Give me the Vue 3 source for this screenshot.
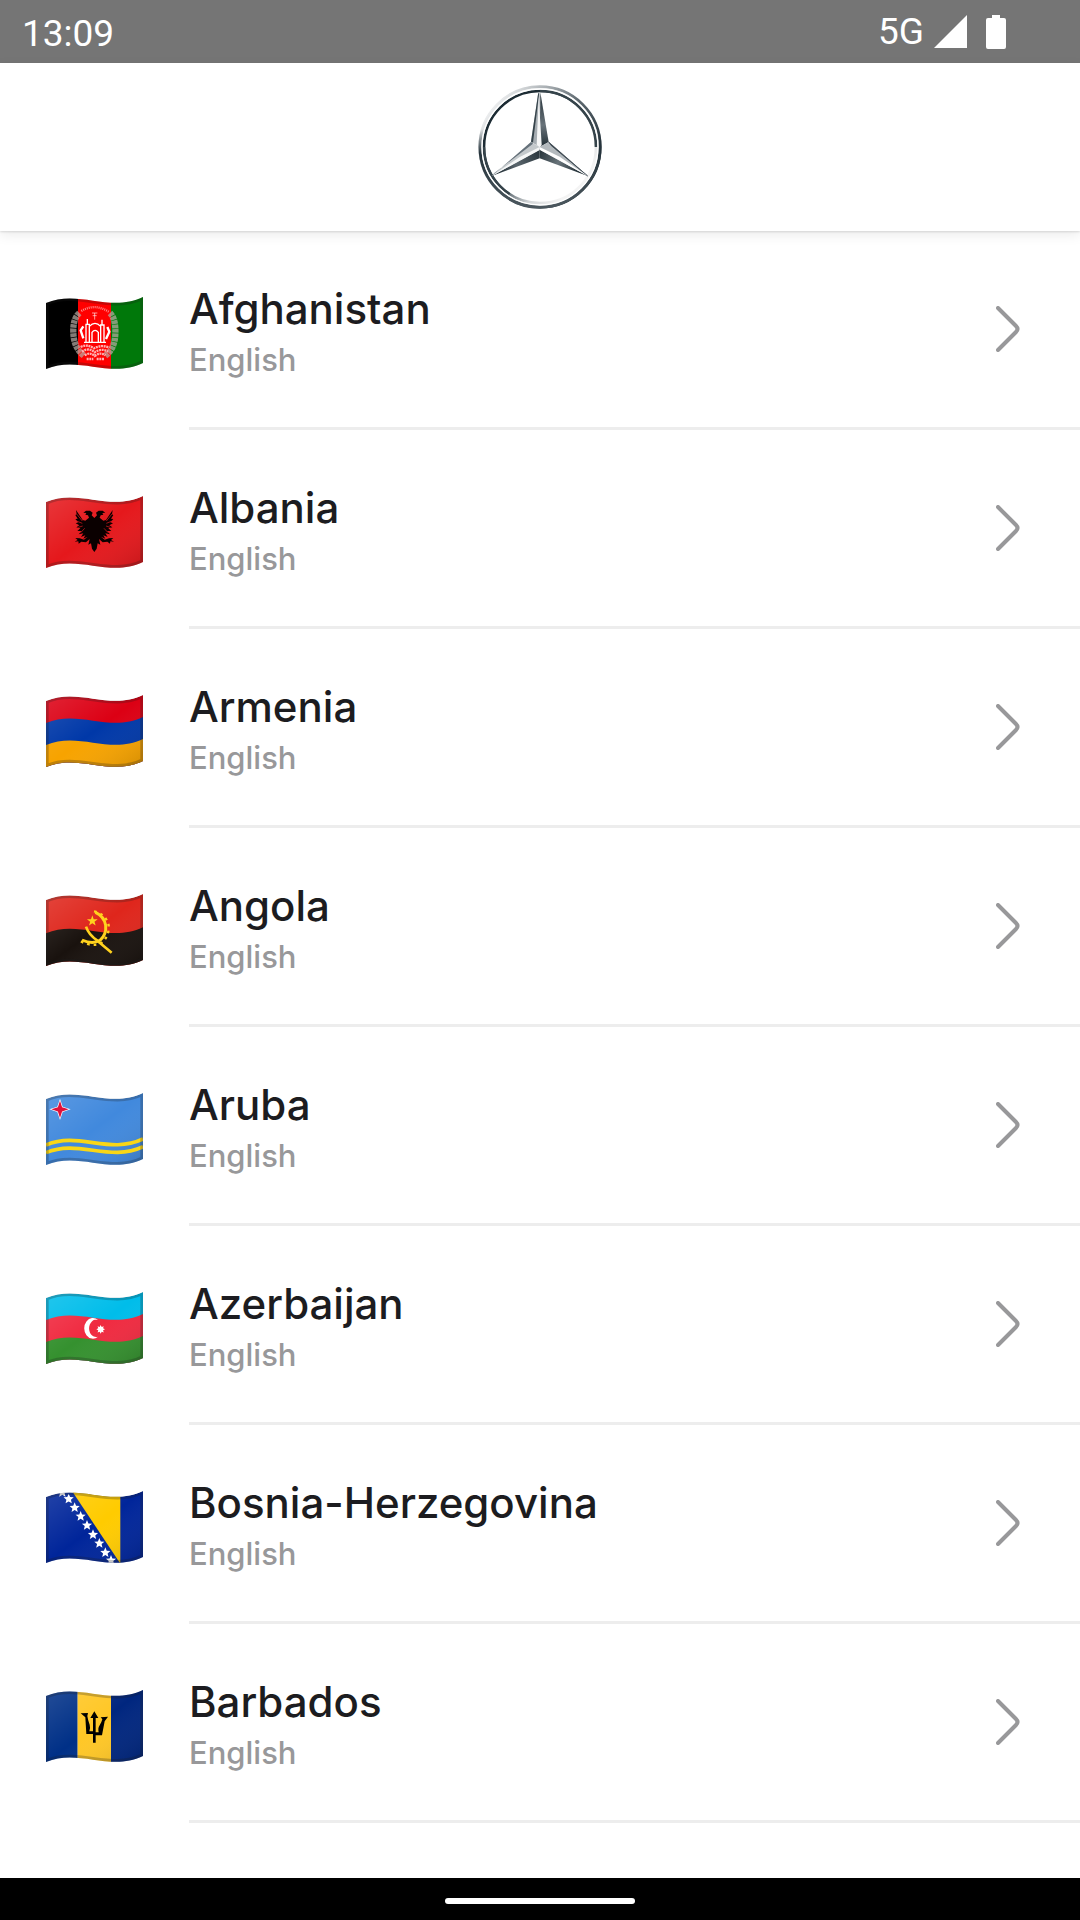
<script setup>
const countries = [
  { code: 'af', name: 'Afghanistan', language: 'English' },
  { code: 'al', name: 'Albania', language: 'English' },
  { code: 'am', name: 'Armenia', language: 'English' },
  { code: 'ao', name: 'Angola', language: 'English' },
  { code: 'aw', name: 'Aruba', language: 'English' },
  { code: 'az', name: 'Azerbaijan', language: 'English' },
  { code: 'ba', name: 'Bosnia-Herzegovina', language: 'English' },
  { code: 'bb', name: 'Barbados', language: 'English' },
]

// Horizontal bands of each flag: [offset from the top edge, colour]
const bands = {
  al: [[0, '#e5181c']],
  am: [[0, '#dc0014'], [66, '#0038a8'], [132, '#f7a300']],
  ao: [[0, '#df261c'], [100, '#19120e']],
  aw: [[0, '#4189dd']],
  az: [[0, '#00bdea'], [66, '#f02a40'], [132, '#35912f']],
  ba: [[0, '#00259a']],
}

// Vertical stripes of each flag: [x, width, colour]
const stripes = {
  af: [[0, 96, '#000'], [96, 99, '#ff0000'], [195, 96, '#00780a']],
  bb: [[0, 95, '#003087'], [95, 100, '#ffc726'], [195, 96, '#00267f']],
}

const bosniaStars = [[49, 4], [68, 24], [86, 50], [104, 76], [123, 103], [141, 131], [160, 157], [178, 185], [195, 208]]

const band = (d) => `M0 ${18 + d}C96 ${d - 24} 192 ${48 + d} 291 ${d}V230H0Z`
const wave = (d) => `M0 ${18 + d}C96 ${d - 24} 192 ${48 + d} 291 ${d}`
const outline = 'M0 18C96 -24 192 48 291 0V198C192 246 96 174 0 216Z'

function star(cx, cy, r, points = 5, inner = 0.4) {
  const out = []
  for (let i = 0; i < points * 2; i++) {
    const a = (Math.PI * i) / points - Math.PI / 2
    const k = i % 2 ? r * inner : r
    out.push(`${(cx + k * Math.cos(a)).toFixed(1)},${(cy + k * Math.sin(a)).toFixed(1)}`)
  }
  return out.join(' ')
}
</script>

<template>
  <div class="screen">
    <div class="status">
      <span class="clock">13:09</span>
      <div class="indicators">
        <span class="network">5G</span>
        <svg class="signal" viewBox="0 0 33 33" aria-hidden="true"><path d="M33 0V33H0Z" fill="#fff" /></svg>
        <svg class="battery" viewBox="0 0 20 34" aria-hidden="true">
          <path d="M6 0H14V3H18Q20 3 20 5V32Q20 34 18 34H2Q0 34 0 32V5Q0 3 2 3H6Z" fill="#fff" />
        </svg>
      </div>
    </div>

    <header class="header">
      <svg class="logo" viewBox="52 41 378 378" role="img" aria-label="Mercedes-Benz">
        <defs>
          <linearGradient id="ring-outer" x1="0.1" y1="0.15" x2="0.85" y2="0.7">
            <stop offset="0" stop-color="#f1f2f3" />
            <stop offset="0.3" stop-color="#a9afb3" />
            <stop offset="0.6" stop-color="#5d686f" />
            <stop offset="1" stop-color="#26343c" />
          </linearGradient>
          <linearGradient id="ring-low" x1="0" y1="0" x2="0" y2="1">
            <stop offset="0.35" stop-color="#26343c" stop-opacity="0" />
            <stop offset="0.55" stop-color="#26343c" />
            <stop offset="1" stop-color="#4b575e" />
          </linearGradient>
          <linearGradient id="ring-inner" x1="0.2" y1="0.3" x2="0.8" y2="0.85">
            <stop offset="0" stop-color="#1c2b33" />
            <stop offset="0.5" stop-color="#58646b" />
            <stop offset="0.75" stop-color="#d3d6d8" />
            <stop offset="1" stop-color="#f4f4f4" />
          </linearGradient>
          <linearGradient id="arm-dark" x1="0" y1="0" x2="0" y2="1">
            <stop offset="0" stop-color="#1f2c33" />
            <stop offset="0.6" stop-color="#69737a" />
            <stop offset="1" stop-color="#222f36" />
          </linearGradient>
          <linearGradient id="arm-right" x1="0" y1="0" x2="1" y2="0.3">
            <stop offset="0" stop-color="#26333a" />
            <stop offset="0.5" stop-color="#69747a" />
            <stop offset="1" stop-color="#1f2c33" />
          </linearGradient>
          <linearGradient id="arm-left" x1="1" y1="0" x2="0" y2="0.3">
            <stop offset="0" stop-color="#26333a" />
            <stop offset="0.6" stop-color="#5b666d" />
            <stop offset="1" stop-color="#26333a" />
          </linearGradient>
        </defs>
        <g fill="none">
          <circle cx="241" cy="230" r="176" stroke="#e6e8e9" stroke-width="16" />
          <circle cx="241" cy="230" r="181" stroke="url(#ring-outer)" stroke-width="8" />
          <circle cx="241" cy="230" r="180" stroke="url(#ring-low)" stroke-width="9" />
          <circle cx="241" cy="230" r="168" stroke="url(#ring-inner)" stroke-width="8" />
          <path d="M241 62A168 168 0 0 1 409 230" stroke="#35434a" stroke-width="8" />
          <path d="M73 230A168 168 0 0 0 150 371" stroke="#35434a" stroke-width="7" />
          <circle cx="241" cy="230" r="174" stroke="#fff" stroke-width="4" />
        </g>
        <path d="M236 66L214 214L240 230V66Z" fill="#a6adb2" />
        <path d="M236 66L214 214L220 217L238 72Z" fill="#35434a" />
        <path d="M242 66L267 215L240 230Z" fill="url(#arm-dark)" />
        <path d="M237 80L231 224L240 232L246 224Z" fill="#f5f6f6" />
        <path d="M240 236V264L96 317Z" fill="url(#arm-left)" />
        <path d="M214 215L240 230V238L96 317Z" fill="#c4c9cc" />
        <path d="M214 215L220 220L104 308L96 317Z" fill="#65717a" />
        <path d="M240 230V239L96 317L180 260Z" fill="#f6f7f7" />
        <path d="M240 236V264L384 317Z" fill="url(#arm-right)" />
        <path d="M267 215L240 230V238L384 317Z" fill="#b4babe" />
        <path d="M267 215L384 317L275 226Z" fill="#36434b" stroke="#36434b" stroke-width="2" />
        <path d="M240 230V238L384 317L300 259Z" fill="#fff" />
      </svg>
    </header>

    <main class="content">
      <ul class="list">
        <li v-for="c in countries" :key="c.code">
          <button type="button" class="row">
            <svg class="flag" viewBox="0 0 291 219" aria-hidden="true">
              <defs>
                <clipPath :id="`cut-${c.code}`"><path :d="outline" /></clipPath>
                <linearGradient :id="`shade-${c.code}`" x1="0" y1="0" x2="1" y2="1">
                  <stop offset="0" stop-color="#fff" stop-opacity="0.14" />
                  <stop offset="0.5" stop-color="#fff" stop-opacity="0" />
                  <stop offset="1" stop-color="#000" stop-opacity="0.14" />
                </linearGradient>
              </defs>
              <g :clip-path="`url(#cut-${c.code})`">
                <path v-for="b in bands[c.code]" :key="b[0]" :d="band(b[0])" :fill="b[1]" />
                <rect v-for="s in stripes[c.code]" :key="s[0]" :x="s[0]" y="0" :width="s[1]" height="219" :fill="s[2]" />
                <path v-if="c.code === 'ba'" d="M66 -18L223 218V-18Z" fill="#ffcb00" />
                <path v-if="c.code !== 'af'" :d="outline" :fill="`url(#shade-${c.code})`" />

                <g v-if="c.code === 'af'" fill="none" stroke="#fff">
                  <path d="M100 48Q80 66 82 108Q84 154 114 176M192 48Q210 66 208 112Q206 156 178 176" stroke="#b5aca4" stroke-width="19" stroke-dasharray="11 2" opacity="0.72" />
                  <path d="M106 42Q146 18 188 44" stroke-width="7" stroke-dasharray="3 3" opacity="0.55" />
                  <path d="M138 48H154M140 56H152M146 48V68" stroke-width="3" opacity="0.6" />
                  <path d="M120 136V82H130V136M164 138V84H174V138M130 88Q147 70 164 88M124 82V66M168 84V68M114 136H180M138 134V106Q147 94 157 106V134" stroke-width="4" />
                  <path d="M112 88L104 100L112 124M184 90L190 104L180 126" stroke-width="7" />
                  <path d="M104 150Q124 140 144 154Q166 142 190 152M108 164Q128 150 146 166Q168 152 186 164M116 175Q132 164 146 177Q164 164 178 175M122 186H142M152 186H174" stroke="#ffb0b0" stroke-width="7" stroke-dasharray="6 2" />
                </g>

                <g v-if="c.code === 'al'" fill="#0a0000">
                  <path d="M145 66L137 58L140 50L132 44L120 44L112 50L121 51L118 56L126 58L129 65L118 74L110 72L90 42L92 55L88 57L95 68L88 69L97 79L89 82L100 88L91 94L103 97L94 105L107 105L98 115L112 112L105 123L118 118L112 128L125 122L114 131L101 127L88 126L95 132L86 137L97 136L98 143L106 137L120 139L131 129L127 146L135 142L138 158L145 168L152 158L155 142L163 146L159 129L170 139L184 137L192 143L193 136L204 137L195 132L202 126L189 127L176 131L165 122L178 128L172 118L185 123L178 112L192 115L183 105L196 105L187 97L199 94L190 88L201 82L193 79L202 69L195 68L202 57L198 55L200 42L180 72L172 74L161 65L164 58L172 56L169 51L178 50L170 44L158 44L150 50L153 58Z" />
                  <path d="M92 54L109 75M94 76L109 82M97 94L110 90M104 110L116 97M198 54L181 75M196 76L181 82M193 94L180 90M186 110L174 97" stroke="#e81c20" stroke-width="2" fill="none" />
                </g>

                <g v-if="c.code === 'ao'" fill="none" stroke="#ffd21e">
                  <path d="M148 55Q174 66 179 94Q182 122 162 139Q140 152 108 138" stroke-width="9" />
                  <path d="M144 52Q180 60 188 94Q190 128 166 147Q140 160 103 142" stroke-width="7" stroke-dasharray="8 12" />
                  <path d="M120 98Q128 122 154 140L197 176" stroke-width="8" stroke-linejoin="round" />
                  <polygon :points="star(139, 81, 17)" fill="#ffd21e" stroke="none" />
                </g>

                <g v-if="c.code === 'aw'">
                  <path :d="wave(138)" fill="none" stroke="#f9d616" stroke-width="11" />
                  <path :d="wave(161)" fill="none" stroke="#f9d616" stroke-width="11" />
                  <polygon :points="star(42, 49, 32, 4, 0.36)" fill="#fff" />
                  <polygon :points="star(42, 49, 26, 4, 0.34)" fill="#e0103a" />
                </g>

                <g v-if="c.code === 'az'" fill="#fff">
                  <path d="M156 84A26 31 0 1 0 156 134A21 26 0 1 1 156 84Z" />
                  <polygon :points="star(164, 112, 13, 8, 0.6)" />
                </g>

                <g v-if="c.code === 'ba'" fill="#fff">
                  <polygon v-for="p in bosniaStars" :key="p[0]" :points="star(p[0], p[1], 16, 5, 0.45)" />
                </g>

                <g v-if="c.code === 'bb'" fill="#000">
                  <path d="M141 158V132H121L118 82L104 70L126 69L124 78Q126 92 131 104Q134 114 130 124H141V84H133L145 64L157 84H149V127H158Q155 114 161 106Q167 96 169 88L164 82L186 80L176 94L168 136H149V158Z" />
                </g>

                <path :d="outline" fill="none" stroke="#1a1a1a" stroke-opacity="0.25" stroke-width="16" />
              </g>
            </svg>
            <span class="body">
              <span class="labels">
                <span class="name">{{ c.name }}</span>
                <span class="language">{{ c.language }}</span>
              </span>
              <svg class="chevron" viewBox="0 0 24 46" aria-hidden="true">
                <path d="M2 2L20 20Q23 23 20 26L2 44" fill="none" stroke="#98989a" stroke-width="4" stroke-linecap="round" />
              </svg>
            </span>
          </button>
        </li>
      </ul>
    </main>

    <footer class="nav"><span class="handle"></span></footer>
  </div>
</template>

<style>
body {
  margin: 0;
  background: #fff;
}
</style>

<style scoped>
.screen {
  display: flex;
  flex-direction: column;
  min-height: 100vh;
  background: #fff;
  font-family: Inter, "Liberation Sans", sans-serif;
}
.status {
  display: flex;
  align-items: center;
  justify-content: space-between;
  box-sizing: border-box;
  height: 63px;
  padding: 0 74px 0 22px;
  background: #757575;
  color: #fff;
  font-family: Roboto, sans-serif;
}
.clock {
  padding-top: 4px;
  font-size: 37px;
  line-height: 44px;
}
.indicators {
  display: flex;
  align-items: center;
}
.network {
  margin-right: 10px;
  font-size: 37px;
  font-weight: 450;
  line-height: 44px;
}
.signal {
  width: 33px;
  height: 33px;
  margin-right: 19px;
}
.battery {
  width: 20px;
  height: 34px;
}
.header {
  position: relative;
  z-index: 1;
  display: flex;
  align-items: center;
  justify-content: center;
  height: 168px;
  background: #fff;
  box-shadow: 0 1px 2px rgba(0, 0, 0, 0.12), 0 4px 12px rgba(0, 0, 0, 0.08);
}
.logo {
  width: 126px;
  height: 126px;
}
.content {
  flex: 1;
}
.list {
  margin: 0;
  padding: 0;
  list-style: none;
}
.row {
  display: flex;
  align-items: flex-start;
  gap: 46px;
  width: 100%;
  padding: 0 0 0 46px;
  border: 0;
  background: none;
  font-family: inherit;
  text-align: left;
  cursor: pointer;
}
.flag {
  flex: none;
  width: 97px;
  height: 73px;
  margin-top: 66px;
}
.body {
  display: flex;
  flex: 1;
  align-items: flex-start;
  justify-content: space-between;
  padding: 50px 60px 46px 0;
  border-bottom: 3px solid #ededed;
}
.labels {
  display: flex;
  flex-direction: column;
}
.name {
  color: #1c1c20;
  font-size: 42px;
  font-weight: 450;
  line-height: 56px;
}
.language {
  padding-top: 2px;
  color: #98989a;
  font-size: 31px;
  font-weight: 450;
  line-height: 42px;
}
.chevron {
  flex: none;
  width: 24px;
  height: 46px;
  margin-top: 25px;
}
.nav {
  display: flex;
  align-items: center;
  justify-content: center;
  height: 42px;
  background: #000;
}
.handle {
  width: 190px;
  height: 6px;
  margin-top: 4px;
  border-radius: 3px;
  background: #fff;
}
</style>
